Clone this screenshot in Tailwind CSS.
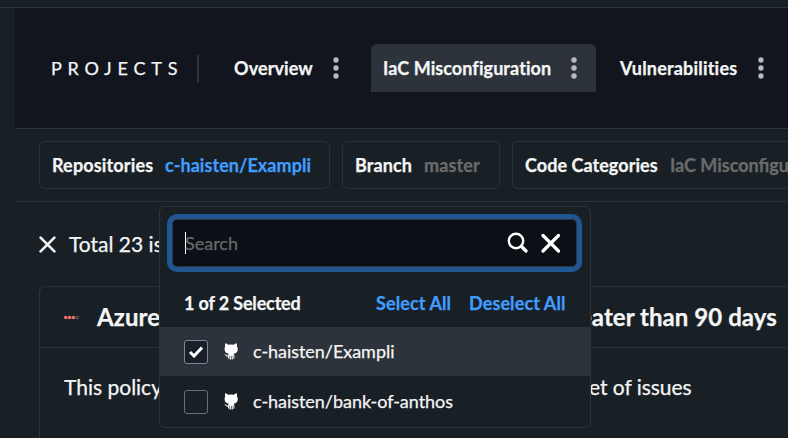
<!DOCTYPE html>
<html lang="en">
<head>
<meta charset="utf-8">
<title>Projects</title>
<script src="https://cdn.jsdelivr.net/npm/@tailwindcss/browser@4"></script>
</head>
<body class="relative h-[438px] w-[788px] overflow-hidden bg-[#182026] font-['Lato',sans-serif] text-[18px] text-[#f5f5f5] whitespace-nowrap [-webkit-text-stroke:0.25px_currentColor]">
<svg class="hidden">
  <symbol id="dots" viewBox="0 0 6 22"><g fill="#b9b9b9"><circle cx="3" cy="3" r="2.7"/><circle cx="3" cy="11" r="2.7"/><circle cx="3" cy="19" r="2.7"/></g></symbol>
  <symbol id="octocat" viewBox="0 0 14 17"><path fill="#fff" d="M1.2 0.3C2.3 0.4 3.4 1 4.2 1.7Q7.2 1.1 9.8 1.7C10.7 1 11.7 0.4 12.8 0.3Q13.3 2 12.9 3.3Q13.9 4.5 13.8 6.5C13.6 9.4 11.8 10.4 9.8 10.8Q10.6 12 10.5 15.2L9.4 16V12.6H8.8V16.5H7.6V12.8H6.9V16.5H5.7V12.8H5.2V16L4.1 15.2V13.8C2 14 1.9 12.2 0.3 11.3Q2 11 2.9 12.3Q3.5 13 4.2 12.5Q4.2 11.5 4.7 10.8C2.4 10.3 0.8 9.3 0.6 6.5Q0.5 4.5 1.2 3.3Q0.8 1.8 1.2 0.3Z"/></symbol>
</svg>
<div class="h-2 border-b border-[#2c343b]"></div>
<header class="ml-[15px] flex h-[121px] items-center border-b border-[#2c333a] bg-[#12151d]">
  <h1 class="ml-[36px] w-[146px] text-[18px] tracking-[5.8px]">PROJECTS</h1>
  <div class="h-[27px] w-[2px] bg-[#343335]"></div>
  <nav class="flex items-center font-bold">
    <div class="ml-[23px] flex h-12 w-[149px] items-center px-3"><span class="w-[99px] shrink-0 tracking-[0.1px]">Overview</span><svg class="h-[22px] w-[6px]"><use href="#dots"/></svg></div>
    <div class="flex h-12 w-[225px] items-center rounded-t-[6px] bg-[#2c333a] px-3"><span class="w-[188px] shrink-0 tracking-[0.08px]">IaC Misconfiguration</span><svg class="h-[22px] w-[6px]"><use href="#dots"/></svg></div>
    <div class="ml-3 flex h-12 items-center pl-3"><span class="w-[138px] shrink-0 tracking-[0.2px]">Vulnerabilities</span><svg class="h-[22px] w-[6px]"><use href="#dots"/></svg></div>
  </nav>
</header>
<section class="ml-[15px] flex h-[73px] gap-3 border-b border-[#2a3137] pt-3 pl-6 font-bold">
  <div class="flex h-12 w-[291px] shrink-0 items-center rounded-[6px] border border-[#2a3137] pl-3"><span class="w-[113px] tracking-[0.15px]">Repositories</span><span class="tracking-[0.06px] text-[#409eff]">c-haisten/Exampli</span></div>
  <div class="flex h-12 w-[158px] shrink-0 items-center rounded-[6px] border border-[#2a3137] pl-3"><span class="w-[69px] tracking-[0.1px]">Branch</span><span class="tracking-[0.15px] text-[#6b6b6b]">master</span></div>
  <div class="flex h-12 w-[276px] shrink-0 items-center overflow-hidden rounded-l-[6px] border border-r-0 border-[#2a3137] pl-3"><span class="w-[145px] shrink-0 tracking-[0.05px]">Code Categories</span><span class="text-[#6b6b6b]">IaC Misconfiguration</span></div>
</section>
<main class="pl-[39px]">
  <div class="flex h-[84px] items-center text-[21px]">
    <svg class="mr-[13px] h-[17px] w-[17px]" viewBox="0 0 17 17" fill="none" stroke="#f5f5f5" stroke-width="2.6" stroke-linecap="round"><path d="M1.6 1.6 15.4 15.4M15.4 1.6 1.6 15.4"/></svg>
    <span>Total 23 issues</span>
  </div>
  <article class="h-[160px] w-[749px] overflow-hidden rounded-tl-[6px] border border-r-0 border-[#2a3137]">
    <div class="flex h-[61px] items-center border-b border-[#2a3137] pl-6 text-[24px] font-bold">
      <svg class="mr-[18px] h-[5px] w-[15px]" viewBox="0 0 15 5"><g fill="#f2706e"><circle cx="1.8" cy="2.5" r="1.8"/><circle cx="5.6" cy="2.5" r="1.8"/><circle cx="9.4" cy="2.5" r="1.8"/></g><circle cx="13.2" cy="2.5" r="1.3" fill="none" stroke="#777c82" stroke-width=".8"/></svg>
      <span class="w-[482px] shrink-0 tracking-[0.1px]">Azure</span><span class="tracking-[0.05px]">eater than 90 days</span>
    </div>
    <div class="flex h-[77px] items-center pl-6 text-[21px]"><span class="w-[525px] shrink-0">This policy</span><span class="tracking-[-0.05px]">et of issues</span></div>
  </article>
</main>
<div class="absolute top-[206px] left-[159px] h-[222px] w-[432px] overflow-hidden rounded-[6px] border border-[#2c3339] bg-[#182026]">
  <div class="mt-[7px] ml-[7px] h-[58px] w-[415px] rounded-[10px] bg-[#205792] p-[5px]">
    <div class="flex h-full items-center rounded-[5px] border border-[#30363a] bg-[#0b0f16] pl-[12px]">
      <span class="h-[22px] w-px bg-white"></span>
      <span class="-ml-px w-[322px] text-[#696969]">Search</span>
      <svg class="h-[22px] w-[22px]" viewBox="0 0 22 22" fill="none" stroke="#fff" stroke-linecap="round"><circle cx="9" cy="9" r="7.2" stroke-width="2.4"/><path d="M14.3 14.3 19 19" stroke-width="3.4"/></svg>
      <svg class="ml-[12px] h-[20px] w-[20px]" viewBox="0 0 20 20" fill="none" stroke="#fff" stroke-width="3.2" stroke-linecap="round"><path d="M2 2.5 17.5 18M17.5 2.5 2 18"/></svg>
    </div>
  </div>
  <div class="flex h-[55px] items-center pt-[7px] pl-6 font-bold"><span class="w-[192px] tracking-[-0.15px]">1 of 2 Selected</span><span class="w-[93px] tracking-[0.1px] text-[#409eff]">Select All</span><span class="tracking-[0.1px] text-[#409eff]">Deselect All</span></div>
  <div class="flex h-[49px] items-center bg-[#2c333a] pl-6">
    <div class="grid h-6 w-6 place-items-center rounded-[3px] border border-[#7b869a] bg-[#182026]"><svg class="h-[12px] w-[14px]" viewBox="0 0 14 12" fill="none" stroke="#fff" stroke-width="3"><path d="M1 6 5 10 13 1.5"/></svg></div>
    <svg class="ml-4 h-[17px] w-[14px]"><use href="#octocat"/></svg><span class="ml-[15px] tracking-[-0.04px]">c-haisten/Exampli</span>
  </div>
  <div class="flex h-[51px] items-center pl-6">
    <div class="h-6 w-6 rounded-[3px] border border-[#667080]"></div>
    <svg class="ml-4 h-[17px] w-[14px]"><use href="#octocat"/></svg><span class="ml-[15px] tracking-[-0.04px]">c-haisten/bank-of-anthos</span>
  </div>
</div>
</body>
</html>
